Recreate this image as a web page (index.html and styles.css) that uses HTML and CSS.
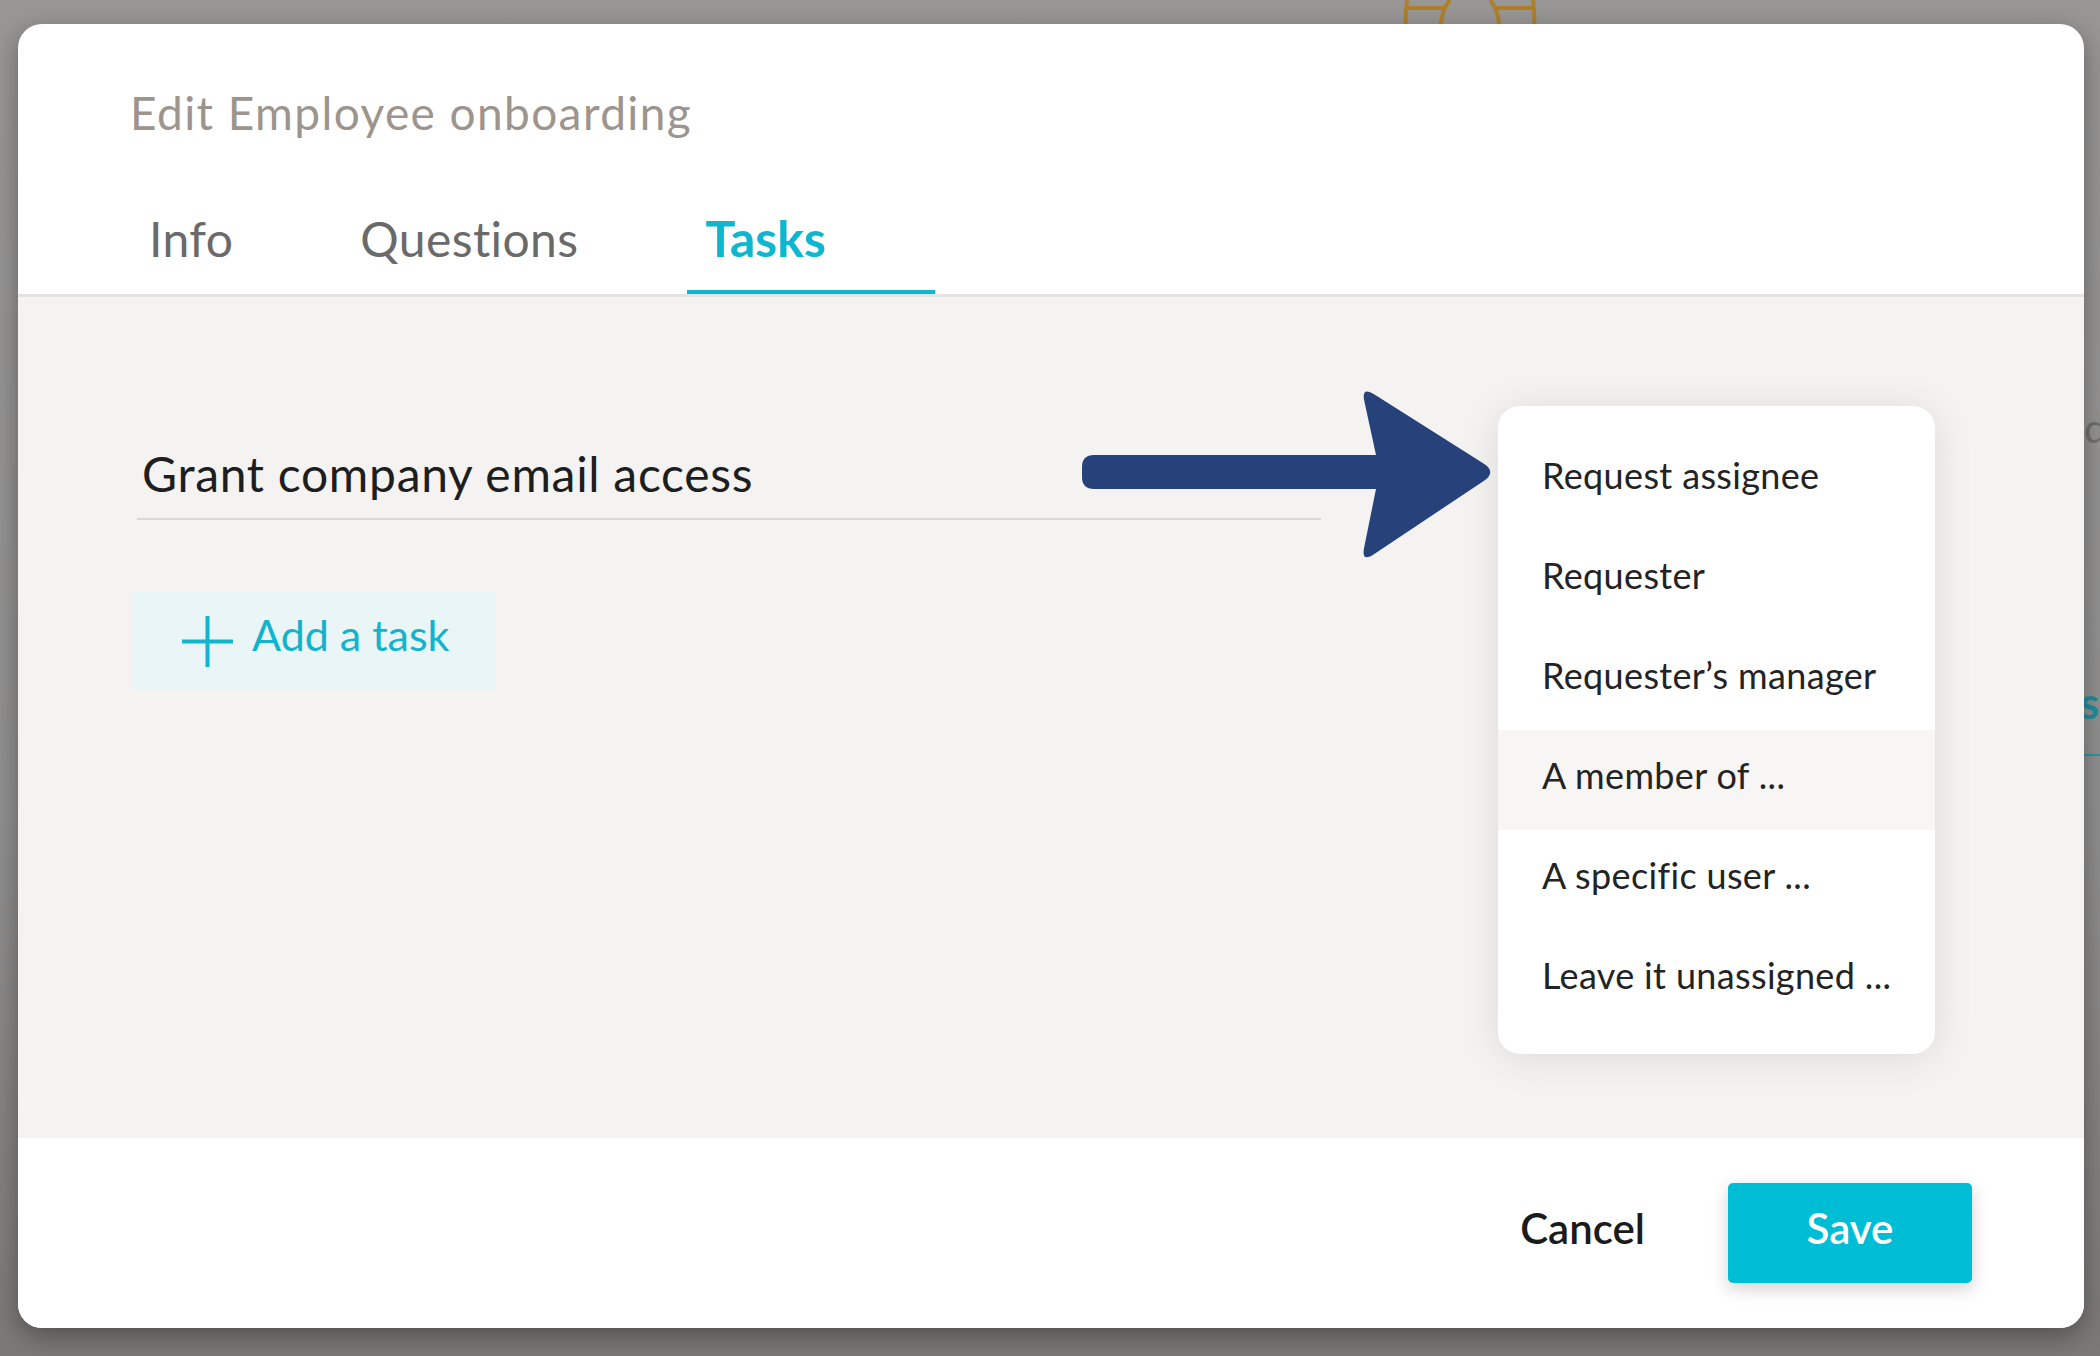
FILE: index.html
```html
<!DOCTYPE html>
<html lang="en">
<head>
<meta charset="utf-8">
<title>Edit Employee onboarding</title>
<link rel="stylesheet" href="styles.css">
</head>
<body>
  <div class="backdrop">
    <svg class="gold-icon" width="140" height="30" viewBox="0 0 140 30">
      <path d="M7 0 Q5 14 6 30" fill="none" stroke="#b07f2c" stroke-width="4"/>
      <path d="M133 0 Q135 14 134 30" fill="none" stroke="#b07f2c" stroke-width="4"/>
      <path d="M50 0 Q40 12 41 30" fill="none" stroke="#b07f2c" stroke-width="4"/>
      <path d="M90 0 Q100 12 99 30" fill="none" stroke="#b07f2c" stroke-width="4"/>
      <path d="M6 8 H44 M96 8 H134" fill="none" stroke="#b07f2c" stroke-width="4"/>
    </svg>
    <span class="bg-word bg-word-d">d</span>
    <span class="bg-word bg-word-st">st</span>
    <span class="bg-line"></span>
  </div>

  <div class="modal">
    <header class="modal-header">
      <h1 class="modal-title">Edit Employee onboarding</h1>
      <nav class="tabs">
        <a class="tab">Info</a>
        <a class="tab">Questions</a>
        <a class="tab tab-active">Tasks</a>
      </nav>
    </header>

    <section class="modal-body">
      <div class="task-input">Grant company email access</div>
      <button class="add-task">
        <svg class="plus-icon" width="51" height="51" viewBox="0 0 51 51">
          <path d="M25.5 0 V51 M0 25.5 H51" stroke="#13b4cc" stroke-width="4" fill="none"/>
        </svg>
        <span class="add-task-label">Add a task</span>
      </button>

      <svg class="callout-arrow" width="430" height="180" viewBox="0 0 430 180">
        <path fill="#27427b" d="M301 70 L289.4 16.6 Q286 1 299.5 9.6 L408.5 78.4 Q422 87 408.7 95.9 L299.3 169.1 Q286 178 289.2 162.3 L301 104 L19 104 Q7 104 7 92 L7 82 Q7 70 19 70 Z"/>
      </svg>

      <ul class="assignee-menu">
        <li class="menu-item">Request assignee</li>
        <li class="menu-item">Requester</li>
        <li class="menu-item">Requester’s manager</li>
        <li class="menu-item menu-item-hover">A member of ...</li>
        <li class="menu-item">A specific user ...</li>
        <li class="menu-item">Leave it unassigned ...</li>
      </ul>
    </section>

    <footer class="modal-footer">
      <button class="btn-cancel">Cancel</button>
      <button class="btn-save">Save</button>
    </footer>
  </div>
</body>
</html>
```

FILE: styles.css
```css
* {
  box-sizing: border-box;
}

html, body {
  margin: 0;
  padding: 0;
}

body {
  width: 2100px;
  height: 1356px;
  overflow: hidden;
  position: relative;
  background: linear-gradient(180deg, #989796 0%, #919090 60%, #7a7977 100%);
  font-family: Lato, "Open Sans", "Noto Sans", sans-serif;
}

.backdrop {
  position: absolute;
  inset: 0;
}

.gold-icon {
  position: absolute;
  left: 1400px;
  top: 0;
}

.bg-word {
  position: absolute;
  left: 2084px;
  font-size: 40px;
  line-height: 1;
}

.bg-word-d {
  top: 408px;
  color: #6f6f6e;
}

.bg-word-st {
  top: 680px;
  left: 2080px;
  color: #1f8f9e;
  font-weight: 700;
  font-size: 44px;
}

.bg-line {
  position: absolute;
  left: 2084px;
  top: 754px;
  width: 20px;
  height: 2px;
  background: #2c98a5;
}

.modal {
  position: absolute;
  left: 18px;
  top: 24px;
  width: 2066px;
  height: 1304px;
  background: #ffffff;
  border-radius: 24px;
  overflow: hidden;
  display: flex;
  flex-direction: column;
  box-shadow: 0 8px 26px rgba(0, 0, 0, 0.35);
}

.modal-header {
  height: 273px;
  flex: none;
  display: flex;
  flex-direction: column;
  border-bottom: 3px solid #e3e3e2;
}

.modal-title {
  margin: 0;
  padding: 61px 0 0 112px;
  font-size: 46px;
  line-height: 1.2;
  font-weight: 400;
  color: #9d958d;
  letter-spacing: 1.4px;
}

.tabs {
  margin-top: auto;
  display: flex;
  align-items: flex-end;
  padding-left: 113px;
}

.tab {
  display: block;
  padding: 0 109px 23px 18px;
  font-size: 48px;
  line-height: 56px;
  letter-spacing: 0.4px;
  color: #6a6a6a;
  border-bottom: 4px solid transparent;
}

.tab-active {
  font-size: 50px;
  font-weight: 700;
  letter-spacing: 0;
  color: #0cb7cf;
  border-bottom-color: #0cb7cf;
  padding-bottom: 24px;
}

.modal-body {
  flex: 1;
  position: relative;
  background: #f4f3f1;
  padding: 147px 0 0 114px;
}

.task-input {
  width: 1184px;
  margin-left: 5px;
  padding: 0 0 14px 5px;
  font-size: 48px;
  line-height: 60px;
  letter-spacing: 0.7px;
  color: #1e1e1e;
  border-bottom: 2px solid #d9d7d3;
}

.add-task {
  margin-top: 72px;
  width: 364px;
  height: 98px;
  display: flex;
  align-items: center;
  gap: 19px;
  padding: 0 0 0 50px;
  border: none;
  border-radius: 3px;
  background: #e9f5f6;
  font-family: inherit;
  font-size: 43px;
  color: #12b4cc;
}

.plus-icon {
  flex: none;
}

.add-task-label {
  line-height: 50px;
  margin-bottom: 12px;
}

.callout-arrow {
  position: absolute;
  left: 1057px;
  top: 88px;
}

.assignee-menu {
  position: absolute;
  left: 1480px;
  top: 109px;
  width: 437px;
  margin: 0;
  padding: 24px 0;
  list-style: none;
  background: #ffffff;
  border-radius: 22px;
  box-shadow: 0 4px 40px rgba(0, 0, 0, 0.10);
}

.menu-item {
  height: 100px;
  padding: 0 0 10px 44px;
  font-size: 36px;
  letter-spacing: 0.35px;
  line-height: 90px;
  color: #232323;
  white-space: nowrap;
}

.menu-item-hover {
  background: #f7f6f5;
}

.modal-footer {
  height: 190px;
  flex: none;
  display: flex;
  justify-content: flex-end;
  align-items: center;
  gap: 41px;
  padding-right: 112px;
  background: #ffffff;
}

.btn-cancel {
  height: 100px;
  padding: 0 42px 10px;
  border: none;
  background: transparent;
  font-family: inherit;
  font-size: 42px;
  font-weight: 600;
  color: #1b1b1b;
}

.btn-save {
  width: 244px;
  height: 100px;
  padding: 0 0 10px;
  border: none;
  border-radius: 5px;
  background: #00bdd6;
  color: #ffffff;
  font-family: inherit;
  font-size: 42px;
  font-weight: 600;
  box-shadow: 0 6px 18px rgba(0, 0, 0, 0.18);
}
```
